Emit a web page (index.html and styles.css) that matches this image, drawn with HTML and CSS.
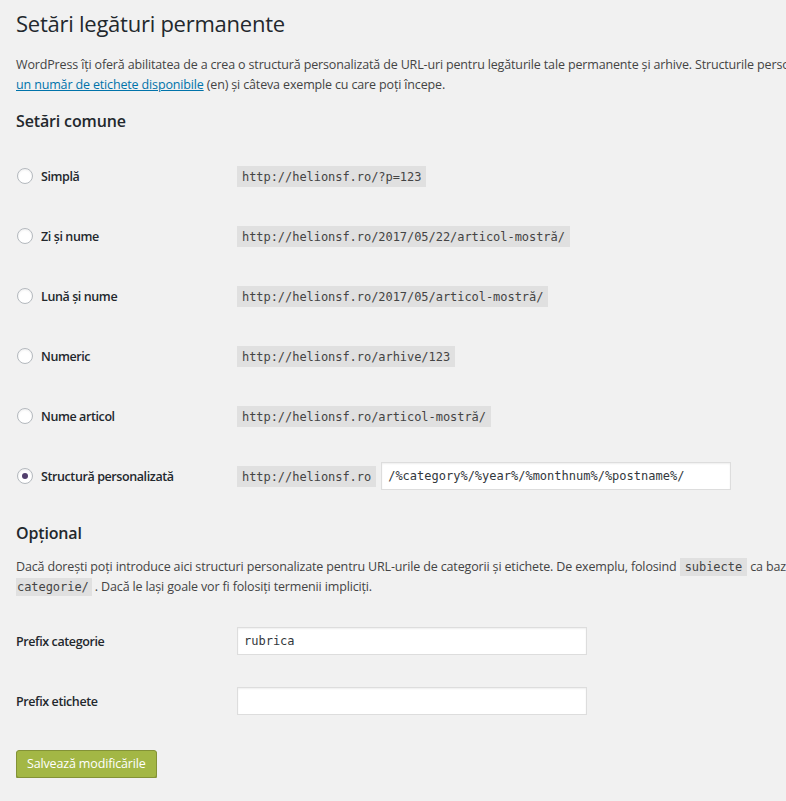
FILE: index.html
```html
<!DOCTYPE html>
<html lang="ro">
<head>
<meta charset="utf-8">
<title>Setări legături permanente</title>
<link rel="stylesheet" href="styles.css">
</head>
<body>
<div class="wrap">
  <h1 class="page-title">Setări legături permanente</h1>
  <p class="intro">
    <span class="line">WordPress îți oferă abilitatea de a crea o structură personalizată de URL-uri pentru legăturile tale permanente și arhive. Structurile personalizate de URL-uri pot îmbunătăți aspectul, utilizabilitatea și compatibilitatea legăturilor tale. Sunt disponibile</span>
    <span class="line"><a href="#" class="link">un număr de etichete disponibile</a> (en) și câteva exemple cu care poți începe.</span>
  </p>

  <h2 class="section-title">Setări comune</h2>
  <div class="form-table">
    <div class="row">
      <label class="radio-label"><span class="radio"></span><span>Simplă</span></label>
      <div class="field"><code class="code">http://helionsf.ro/?p=123</code></div>
    </div>
    <div class="row">
      <label class="radio-label"><span class="radio"></span><span>Zi și nume</span></label>
      <div class="field"><code class="code">http://helionsf.ro/2017/05/22/articol-mostră/</code></div>
    </div>
    <div class="row">
      <label class="radio-label"><span class="radio"></span><span>Lună și nume</span></label>
      <div class="field"><code class="code">http://helionsf.ro/2017/05/articol-mostră/</code></div>
    </div>
    <div class="row">
      <label class="radio-label"><span class="radio"></span><span>Numeric</span></label>
      <div class="field"><code class="code">http://helionsf.ro/arhive/123</code></div>
    </div>
    <div class="row">
      <label class="radio-label"><span class="radio"></span><span>Nume articol</span></label>
      <div class="field"><code class="code">http://helionsf.ro/articol-mostră/</code></div>
    </div>
    <div class="row">
      <label class="radio-label"><span class="radio checked"></span><span>Structură personalizată</span></label>
      <div class="field"><code class="code">http://helionsf.ro</code><input class="text-input custom" type="text" value="/%category%/%year%/%monthnum%/%postname%/"></div>
    </div>
  </div>

  <h2 class="section-title optional">Opțional</h2>
  <p class="desc">
    <span class="line">Dacă dorești poți introduce aici structuri personalizate pentru URL-urile de categorii și etichete. De exemplu, folosind <code class="code">subiecte</code> ca bază pentru categorii, legăturile vor fi de forma <code class="code">http://helionsf.ro/subiecte/fara-</code></span>
    <span class="line"><code class="code code-cont">categorie/</code> . Dacă le lași goale vor fi folosiți termenii impliciți.</span>
  </p>

  <div class="form-table">
    <div class="row">
      <label class="field-label">Prefix categorie</label>
      <div class="field"><input class="text-input prefix" type="text" value="rubrica"></div>
    </div>
    <div class="row">
      <label class="field-label">Prefix etichete</label>
      <div class="field"><input class="text-input prefix" type="text" value=""></div>
    </div>
  </div>

  <div class="submit">
    <button class="button-primary" type="button">Salvează modificările</button>
  </div>
</div>
</body>
</html>
```

FILE: styles.css
```css
html, body {
  margin: 0;
  padding: 0;
  background: #f1f1f1;
  overflow: hidden;
}

body {
  width: 786px;
  height: 801px;
  font-family: "Open Sans", "Noto Sans", sans-serif;
  font-size: 12.5px;
  letter-spacing: -0.15px;
  color: #444;
}

.wrap {
  padding: 0 0 0 16px;
  overflow: hidden;
}

.page-title {
  margin: 0;
  padding: 9px 0 4px;
  font-size: 22px;
  line-height: 29px;
  letter-spacing: -0.25px;
  font-weight: 400;
  color: #23282d;
}

.intro {
  margin: 13px 0 0;
  line-height: 19.5px;
}

.line {
  display: block;
  white-space: nowrap;
}

.link {
  color: #0073aa;
  text-decoration: underline;
}

.section-title {
  margin: 17px 0 14.5px;
  font-size: 16px;
  line-height: 20px;
  letter-spacing: -0.15px;
  font-weight: 600;
  color: #23282d;
}

.section-title.optional {
  margin-bottom: 14px;
}

.form-table {
  display: flex;
  flex-direction: column;
}

.row {
  display: grid;
  grid-template-columns: 221px 1fr;
  align-items: center;
  height: 60px;
  padding-top: 1px;
  box-sizing: border-box;
}

.radio-label,
.field-label {
  display: flex;
  align-items: center;
  gap: 8px;
  font-weight: 600;
  letter-spacing: -0.4px;
  color: #23282d;
}

.radio-label {
  padding-left: 1px;
}

.radio {
  box-sizing: border-box;
  flex: none;
  width: 16px;
  height: 16px;
  border: 1px solid #b4b9be;
  border-radius: 50%;
  background: #fff;
  box-shadow: inset 0 1px 2px rgba(0, 0, 0, 0.07);
  display: flex;
  align-items: center;
  justify-content: center;
}

.radio.checked::before {
  content: "";
  width: 6px;
  height: 6px;
  border-radius: 50%;
  background: #523f6d;
}

.field {
  display: flex;
  align-items: center;
  gap: 5px;
}

.code {
  font-family: "DejaVu Sans Mono", "Liberation Mono", monospace;
  font-size: 12px;
  line-height: 16px;
  letter-spacing: -0.05px;
  padding: 3px 5px 2px;
  background: rgba(0, 0, 0, 0.07);
  color: #444;
}

.text-input {
  box-sizing: border-box;
  width: 350px;
  height: 28px;
  margin: 0;
  padding: 0 6px;
  border: 1px solid #ddd;
  background: #fff;
  box-shadow: inset 0 1px 2px rgba(0, 0, 0, 0.07);
  font-family: "DejaVu Sans Mono", "Liberation Mono", monospace;
  font-size: 12px;
  color: #32373c;
  outline: none;
}

.desc {
  margin: 0 0 14px;
  line-height: 20px;
}

.desc .code {
  padding: 2px 5px;
}

.desc .code-cont {
  padding: 2px 3px 2px 1px;
}

.submit {
  padding-top: 19px;
}

.button-primary {
  height: 28px;
  padding: 0 10px 1px;
  border: 1px solid #839237;
  border-radius: 3px;
  background: #a3b745;
  box-shadow: 0 1px 0 #839237;
  color: #fff;
  font-family: "Open Sans", "Noto Sans", sans-serif;
  font-size: 12.5px;
  letter-spacing: -0.15px;
  line-height: 26px;
  cursor: pointer;
}
```
